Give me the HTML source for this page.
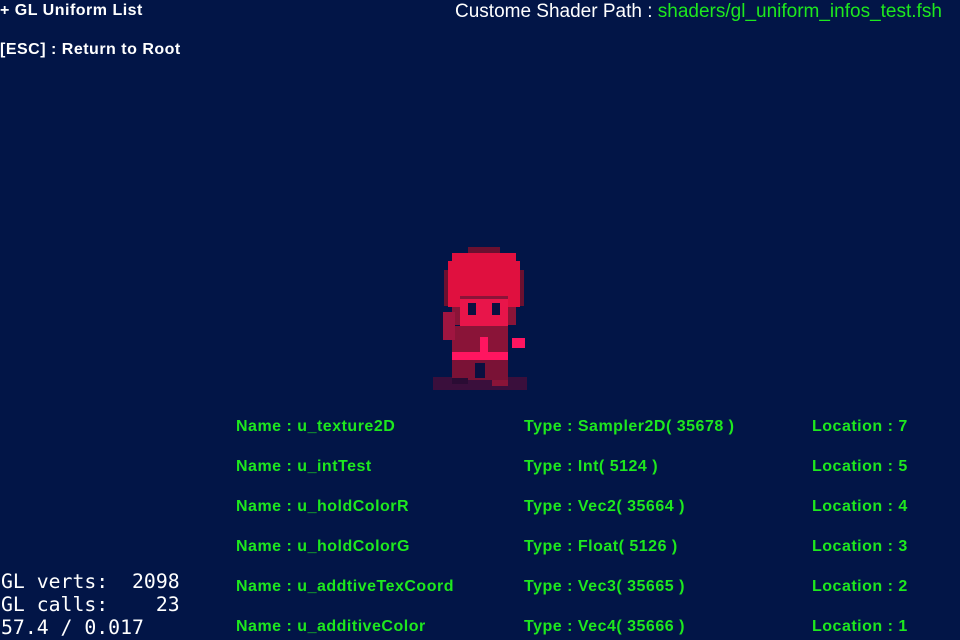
<!DOCTYPE html>
<html><head><style>
body{margin:0;width:960px;height:640px;background:#021547;overflow:hidden;position:relative;font-family:"Liberation Sans",sans-serif;}
.t{position:absolute;white-space:pre;font-size:16px;line-height:20px;font-weight:bold;letter-spacing:0.5px;}
.w{color:#fff;font-size:17px;font-weight:normal}
.g{color:#1ee81e;}
.m{position:absolute;font-family:"DejaVu Sans Mono","Liberation Mono",monospace;color:#fff;font-size:19.8px;line-height:23px;white-space:pre;left:1px;}
</style></head><body>
<div class="t w" style="left:0;top:1px;font-weight:bold;font-size:16px">+ GL Uniform List</div>
<div class="t w" style="left:0;top:40px;font-weight:bold;font-size:16px">[ESC] : Return to Root</div>
<div class="t w" style="left:455px;top:2px;font-size:19px;letter-spacing:0">Custome Shader Path : <span style="color:#1ee81e">shaders/gl_uniform_infos_test.fsh</span></div>

<svg style="position:absolute;left:0;top:0" width="960" height="640">
<rect x="433" y="377" width="94" height="13" fill="#3a0f3c"/>
<rect x="468" y="247" width="32" height="6" fill="#6a1030"/>
<rect x="452" y="253" width="64" height="8" fill="#e0103f"/>
<rect x="448" y="261" width="72" height="46" fill="#e0103f"/>
<rect x="444" y="270" width="4" height="36" fill="#6a1030"/>
<rect x="520" y="270" width="4" height="36" fill="#6a1030"/>
<rect x="452" y="307" width="8" height="18" fill="#8a1438"/>
<rect x="508" y="307" width="8" height="18" fill="#8a1438"/>
<rect x="460" y="296" width="48" height="30" fill="#e8154a"/>
<rect x="460" y="296" width="48" height="3" fill="#8a1438"/>
<rect x="468" y="303" width="8" height="12" fill="#0a1040"/>
<rect x="492" y="303" width="8" height="12" fill="#0a1040"/>
<rect x="476" y="328" width="16" height="3" fill="#0a1040"/>
<rect x="452" y="326" width="56" height="48" fill="#8a1438"/>
<rect x="443" y="312" width="12" height="28" fill="#a01540"/>
<rect x="440" y="312" width="3" height="28" fill="#0a1040"/>
<rect x="480" y="337" width="8" height="20" fill="#ff1560"/>
<rect x="452" y="352" width="56" height="8" fill="#ff1560"/>
<rect x="512" y="338" width="13" height="10" fill="#ff1560"/>
<rect x="452" y="360" width="56" height="20" fill="#7a1236"/>
<rect x="475" y="363" width="10" height="15" fill="#0a1040"/>
<rect x="452" y="378" width="16" height="6" fill="#2a0c34"/>
<rect x="492" y="380" width="16" height="6" fill="#8a1438"/>
</svg>

<div class="t g" style="left:236px;top:417px">Name : u_texture2D</div>
<div class="t g" style="left:524px;top:417px">Type : Sampler2D( 35678 )</div>
<div class="t g" style="left:812px;top:417px">Location : 7</div>
<div class="t g" style="left:236px;top:457px">Name : u_intTest</div>
<div class="t g" style="left:524px;top:457px">Type : Int( 5124 )</div>
<div class="t g" style="left:812px;top:457px">Location : 5</div>
<div class="t g" style="left:236px;top:497px">Name : u_holdColorR</div>
<div class="t g" style="left:524px;top:497px">Type : Vec2( 35664 )</div>
<div class="t g" style="left:812px;top:497px">Location : 4</div>
<div class="t g" style="left:236px;top:537px">Name : u_holdColorG</div>
<div class="t g" style="left:524px;top:537px">Type : Float( 5126 )</div>
<div class="t g" style="left:812px;top:537px">Location : 3</div>
<div class="t g" style="left:236px;top:577px">Name : u_addtiveTexCoord</div>
<div class="t g" style="left:524px;top:577px">Type : Vec3( 35665 )</div>
<div class="t g" style="left:812px;top:577px">Location : 2</div>
<div class="t g" style="left:236px;top:617px">Name : u_additiveColor</div>
<div class="t g" style="left:524px;top:617px">Type : Vec4( 35666 )</div>
<div class="t g" style="left:812px;top:617px">Location : 1</div>

<div class="m" style="top:570px">GL verts:  2098
GL calls:    23
57.4 / 0.017</div>
</body></html>
